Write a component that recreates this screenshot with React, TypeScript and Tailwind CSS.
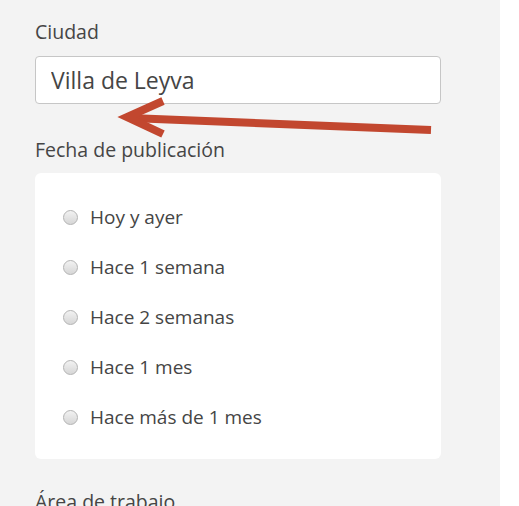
import React from 'react';

const options = ['Hoy y ayer', 'Hace 1 semana', 'Hace 2 semanas', 'Hace 1 mes', 'Hace más de 1 mes'];

export default function App() {
  return (
    <div className="flex h-[506px] w-[519px] overflow-hidden bg-white font-['Open_Sans',sans-serif] text-[#454545]">
      <div className="relative w-[500px] shrink-0 bg-[#f3f3f3] pl-[35px] pt-[20px]">
        <div className="w-[406px]">
          <div className="text-[19.5px] leading-[24px]">Ciudad</div>
          <input
            readOnly
            value="Villa de Leyva"
            className="mt-[12px] h-[48px] w-full rounded-[4px] border border-[#c6c6c6] bg-white px-[15px] text-[23px] text-[#454545] outline-none"
          />

          <div className="mt-[34px] text-[19.5px] leading-[24px]">Fecha de publicación</div>

          <div className="mt-[11px] rounded-[6px] bg-white pt-[19px] pb-[17px] pl-[28px]">
            {options.map((opt) => (
              <label key={opt} className="flex h-[50px] items-center gap-[12px] text-[19px]">
                <span className="h-[15px] w-[15px] shrink-0 rounded-full border border-[#b3b3b3] bg-gradient-to-b from-[#f2f2f2] to-[#d6d6d6]" />
                <span>{opt}</span>
              </label>
            ))}
          </div>

          <div className="mt-[31px] text-[19.5px] leading-[24px]">Área de trabajo</div>
        </div>

        {/* annotation arrow */}
        <svg className="absolute left-0 top-0" width="500" height="160" viewBox="0 0 500 160">
          <line x1="431" y1="130" x2="130" y2="118" stroke="#c2472f" strokeWidth="8" />
          <polyline
            points="163,101 127,117 163,134"
            fill="none"
            stroke="#c2472f"
            strokeWidth="8"
            strokeLinejoin="miter"
          />
        </svg>
      </div>
      <div className="flex-1 bg-white" />
    </div>
  );
}
